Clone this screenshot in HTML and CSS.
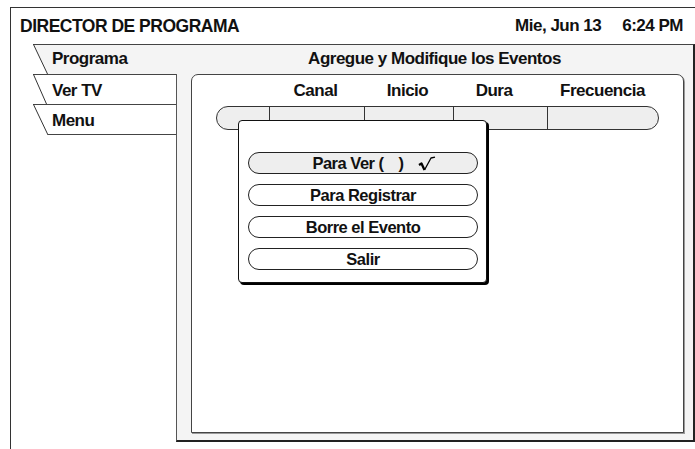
FILE: index.html
```html
<!DOCTYPE html>
<html>
<head>
  <meta charset="utf-8">
  <title>Director de Programa</title>
  <link rel="stylesheet" href="styles.css">
</head>
<body>
  <div class="screen">
    <div class="topbar">
      <span class="title">DIRECTOR DE PROGRAMA</span>
      <span class="clock"><span>Mie, Jun 13</span><span>6:24 PM</span></span>
    </div>

    <div class="guide">
      <div class="tabrow">
        <svg class="slant" width="15" height="30" viewBox="0 0 15 30">
          <polygon points="0.5,0.5 15,0.5 15,30 14.5,30" fill="#f4f4f4"/>
          <line x1="0" y1="0.5" x2="15" y2="0.5" stroke="#444"/>
          <line x1="0.5" y1="0.5" x2="14.5" y2="30" stroke="#333"/>
        </svg>
        <div class="tabhead">
          <span class="tablabel">Programa</span>
          <span class="paneltitle">Agregue y Modifique los Eventos</span>
        </div>
      </div>

      <div class="guide-body">
        <div class="tabs">
          <div class="tab">
            <svg class="slant" width="15" height="30" viewBox="0 0 15 30">
              <line x1="0" y1="0.5" x2="15" y2="0.5" stroke="#444"/>
              <line x1="0.5" y1="0.5" x2="13.5" y2="30" stroke="#333"/>
            </svg>
            <div class="tablabel">Ver TV</div>
          </div>
          <div class="tab last">
            <svg class="slant" width="15" height="31" viewBox="0 0 15 31">
              <line x1="0" y1="0.5" x2="15" y2="0.5" stroke="#444"/>
              <line x1="0.5" y1="0.5" x2="15" y2="31" stroke="#333"/>
            </svg>
            <div class="tablabel">Menu</div>
          </div>
        </div>

        <div class="panel">
          <div class="events">
            <div class="cols">
              <span></span>
              <span>Canal</span>
              <span>Inicio</span>
              <span class="dura">Dura</span>
              <span>Frecuencia</span>
            </div>
            <div class="slot">
              <span></span><span></span><span></span><span></span><span></span>
            </div>

            <div class="popup">
              <div class="opt selected">
                <span>Para Ver (</span><span class="blank"></span><span>)</span>
                <svg class="check" width="19" height="15" viewBox="0 0 19 15">
                  <path d="M2 9 L4.5 7.5 L7.5 14" fill="none" stroke="#000" stroke-width="2.3" stroke-linejoin="round"/>
                  <path d="M7.5 14 L14 2 L18 1.2" fill="none" stroke="#000" stroke-width="1.3" stroke-linejoin="round"/>
                </svg>
              </div>
              <div class="opt">Para Registrar</div>
              <div class="opt">Borre el Evento</div>
              <div class="opt">Salir</div>
            </div>
          </div>
        </div>
      </div>
    </div>
  </div>
</body>
</html>
```

FILE: styles.css
```css
body {
  margin: 0;
  background: #fff;
  overflow: hidden;
  font-family: "Liberation Sans", Arial, sans-serif;
  font-weight: bold;
  color: #111;
  letter-spacing: -0.5px;
}

.screen {
  margin: 7px 0 0 10px;
  height: 460px;
  border-top: 1px solid #333;
  border-left: 1px solid #333;
}

.topbar {
  display: flex;
  justify-content: space-between;
  padding: 9px 12px 0 9px;
  height: 27px;
  font-size: 17.5px;
  line-height: 18px;
}

.clock {
  display: flex;
  gap: 21px;
  font-size: 17px;
}

.guide {
  margin-left: 22px;
}

.tabrow {
  display: flex;
  height: 30px;
}

.slant {
  display: block;
  flex: none;
}

.tabhead {
  flex: 1;
  display: flex;
  background: #f4f4f4;
  border-top: 1px solid #444;
  border-right: 2px solid #222;
  font-size: 17px;
  line-height: 28px;
}

.tabhead .tablabel {
  width: 124px;
  padding-left: 4px;
}

.paneltitle {
  flex: 1;
  text-align: center;
}

.guide-body {
  display: flex;
}

.tabs {
  width: 143px;
  flex: none;
}

.tab {
  display: flex;
  height: 30px;
  font-size: 17px;
}

.tab .tablabel {
  flex: 1;
  border-top: 1px solid #444;
  padding: 2px 0 0 4px;
  line-height: 27px;
}

.tab.last {
  height: 31px;
}

.tab.last .tablabel {
  border-bottom: 1px solid #444;
}

.panel {
  flex: 1;
  height: 368px;
  box-sizing: border-box;
  background: #f4f4f4;
  border-left: 1px solid #555;
  border-right: 2px solid #222;
  border-bottom: 2px solid #222;
  padding: 0 9px 7px 14px;
}

.events {
  position: relative;
  height: 100%;
  box-sizing: border-box;
  background: #fff;
  border: 1px solid #444;
  border-radius: 7px 7px 0 0;
  box-shadow: 1px 1px 0 #999;
}

.cols,
.slot {
  display: grid;
  grid-template-columns: 52px 95px 89px 94px 113px;
  margin-left: 24px;
}

.cols {
  margin-top: 7px;
  height: 18px;
  font-size: 17px;
  line-height: 18px;
  text-align: center;
}

.cols .dura {
  padding-right: 10px;
}

.slot {
  margin-top: 6px;
  width: 443px;
  height: 24px;
  box-sizing: border-box;
  background: #eee;
  border: 1px solid #333;
  border-radius: 12px;
  overflow: hidden;
}

.slot span + span {
  border-left: 1px solid #333;
}

.popup {
  position: absolute;
  left: 46px;
  top: 45px;
  width: 249px;
  height: 163px;
  box-sizing: border-box;
  background: #fff;
  border: 1px solid #111;
  border-radius: 4px;
  box-shadow: 2px 2px 0 #000;
  padding: 31px 0 0 9px;
  display: flex;
  flex-direction: column;
  gap: 10px;
}

.opt {
  width: 230px;
  height: 22px;
  box-sizing: border-box;
  border: 1px solid #222;
  border-radius: 11px;
  font-size: 16.5px;
  line-height: 20px;
  text-align: center;
}

.opt.selected {
  display: flex;
  justify-content: center;
  align-items: center;
  background: #eee;
  padding-left: 22px;
}

.blank {
  width: 15px;
}

.check {
  display: block;
  margin-left: 13px;
  margin-top: 1px;
}
```
